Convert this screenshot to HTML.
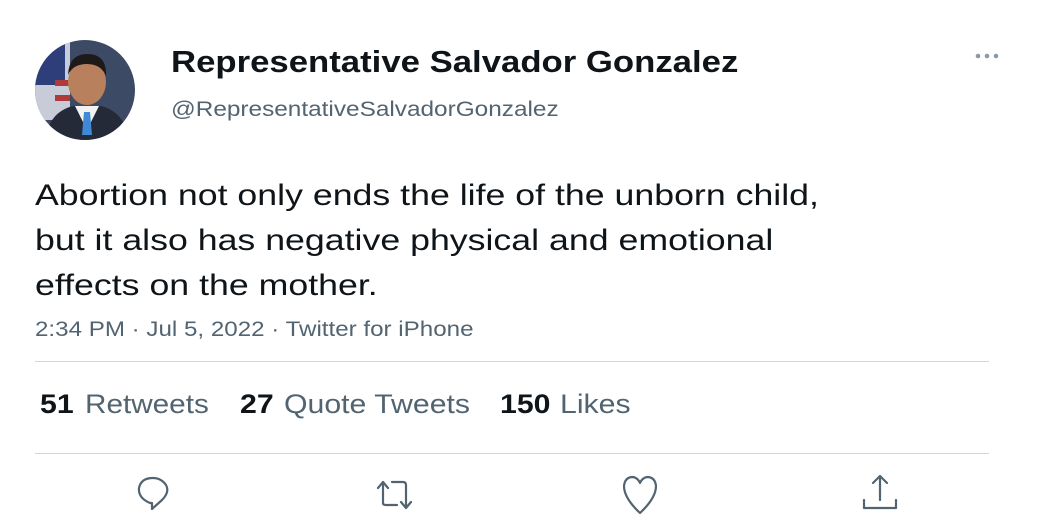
<!DOCTYPE html>
<html><head><style>
body{margin:0;width:1050px;height:525px;background:#fff;font-family:"Liberation Sans",Arial,sans-serif;position:relative;overflow:hidden}
.a{position:absolute;white-space:nowrap;transform-origin:0 0}
</style></head><body>
<svg class="a" style="left:35px;top:40px" width="100" height="100" viewBox="0 0 100 100">
<defs><clipPath id="c"><circle cx="50" cy="50" r="50"/></clipPath></defs>
<g clip-path="url(#c)">
<rect width="100" height="100" fill="#3d4a66"/>
<rect x="0" y="0" width="35" height="80" fill="#c8ccd8"/>
<rect x="0" y="0" width="30" height="45" fill="#2d3e7a"/>
<rect x="20" y="40" width="15" height="6" fill="#b03a3a"/><rect x="20" y="55" width="15" height="6" fill="#b03a3a"/>
<ellipse cx="52" cy="42" rx="19" ry="23" fill="#b8805c"/>
<path d="M33 35 Q34 14 52 14 Q72 14 71 36 Q66 24 52 24 Q38 24 33 35Z" fill="#1e1a1a"/>
<path d="M10 100 Q14 72 38 66 L66 66 Q90 72 94 100Z" fill="#252a38"/>
<path d="M40 66 L52 90 L64 66Z" fill="#f2f2f2"/>
<path d="M49 72 L55 72 L57 95 L47 95Z" fill="#3f8ad6"/>
</g></svg>
<div class="a" style="left:171px;top:44px;font-size:31px;font-weight:bold;color:#0f1419;transform:scaleX(1.12)">Representative Salvador Gonzalez</div>
<div class="a" style="left:171px;top:98px;font-size:21px;color:#536471;transform:scaleX(1.16)">@RepresentativeSalvadorGonzalez</div>
<svg class="a" style="left:974px;top:51px" width="28" height="10" fill="#8b98a5"><circle cx="4" cy="5" r="2.3"/><circle cx="13" cy="5" r="2.3"/><circle cx="22" cy="5" r="2.3"/></svg>
<div class="a" style="left:35px;top:173px;font-size:30px;line-height:45px;color:#0f1419;transform:scaleX(1.19)">Abortion not only ends the life of the unborn child,<br>but it also has negative physical and emotional<br>effects on the mother.</div>
<div class="a" style="left:35px;top:318px;font-size:21px;color:#536471;transform:scaleX(1.15)">2:34 PM · Jul 5, 2022 · Twitter for iPhone</div>
<div class="a" style="left:35px;top:361px;width:954px;height:1px;background:#cfd9de"></div>
<div class="a" style="left:40px;top:389px;font-size:27px;font-weight:bold;color:#0f1419;transform:scaleX(1.12)">51</div>
<div class="a" style="left:85px;top:389px;font-size:27px;color:#536471;transform:scaleX(1.1)">Retweets</div>
<div class="a" style="left:240px;top:389px;font-size:27px;font-weight:bold;color:#0f1419;transform:scaleX(1.12)">27</div>
<div class="a" style="left:284px;top:389px;font-size:27px;color:#536471;transform:scaleX(1.12)">Quote Tweets</div>
<div class="a" style="left:500px;top:389px;font-size:27px;font-weight:bold;color:#0f1419;transform:scaleX(1.12)">150</div>
<div class="a" style="left:560px;top:389px;font-size:27px;color:#536471;transform:scaleX(1.12)">Likes</div>
<div class="a" style="left:35px;top:453px;width:954px;height:1px;background:#cfd9de"></div>
<svg class="a" style="left:0;top:470px" width="1050" height="55" fill="none" stroke="#536471" stroke-width="2.2" stroke-linecap="round" stroke-linejoin="round">
<path d="M152 33 L152 39 L162 30 Q170 22 166 15 Q161 8 153 8 Q141 8 139 18 Q138 28 150 33Z"/>
<path d="M378 18 L383 12 L388 18 M383 12 L383 33 Q383 35 386 35 L397 35 M392 12 L403 12 Q406 12 406 15 L406 38 M401 32 L406 38 L411 32"/>
<path d="M640 43 Q624 28 624 16 Q625 7 633 7 Q638 8 640 13 Q642 8 647 7 Q655 7 656 16 Q656 28 640 43Z"/>
<path d="M873 13 L880 6 L887 13 M880 6 L880 30 M864 30 L864 38 L896 38 L896 30"/>
</svg>
</body></html>
